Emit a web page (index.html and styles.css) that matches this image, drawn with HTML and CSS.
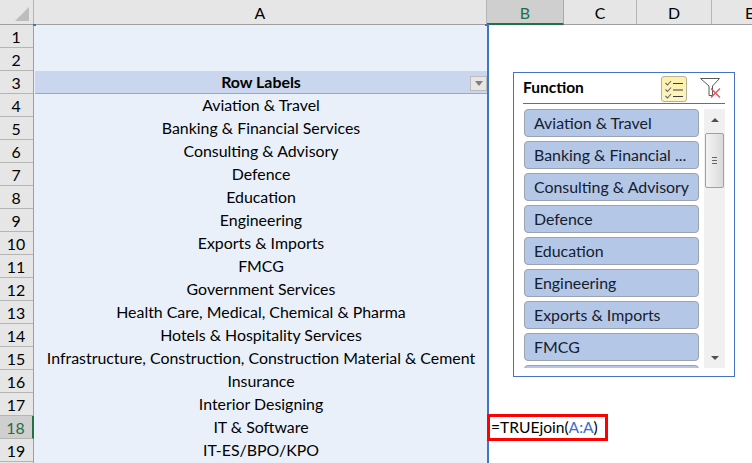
FILE: index.html
```html
<!DOCTYPE html>
<html lang="en">
<head>
<meta charset="utf-8">
<title>Sheet</title>
<link rel="stylesheet" href="styles.css">
</head>
<body>
<div class="sheet">
  <div class="colbar">
    <div class="corner"><svg width="16" height="16" viewBox="0 0 16 16"><polygon points="15,1 15,15 1,15" fill="#bdbdbd"/></svg></div>
    <div class="ch cha">A</div>
    <div class="ch chb">B</div>
    <div class="ch chc">C</div>
    <div class="ch chd">D</div>
    <div class="ch che">E</div>
  </div>
  <div class="body">
    <div class="rowbar">
      <div class="rh">1</div><div class="rh">2</div><div class="rh">3</div><div class="rh">4</div><div class="rh">5</div>
      <div class="rh">6</div><div class="rh">7</div><div class="rh">8</div><div class="rh">9</div><div class="rh">10</div>
      <div class="rh">11</div><div class="rh">12</div><div class="rh">13</div><div class="rh">14</div><div class="rh">15</div>
      <div class="rh">16</div><div class="rh">17</div><div class="rh rh-sel">18</div><div class="rh">19</div>
    </div>
    <div class="cola">
      <div class="cell"></div>
      <div class="cell"></div>
      <div class="cell head">Row Labels<span class="dd"><svg width="8" height="5" viewBox="0 0 8 5"><polygon points="0,0 8,0 4,5" fill="#7f7f7f"/></svg></span></div>
      <div class="cell">Aviation &amp; Travel</div>
      <div class="cell">Banking &amp; Financial Services</div>
      <div class="cell">Consulting &amp; Advisory</div>
      <div class="cell">Defence</div>
      <div class="cell">Education</div>
      <div class="cell">Engineering</div>
      <div class="cell">Exports &amp; Imports</div>
      <div class="cell">FMCG</div>
      <div class="cell">Government Services</div>
      <div class="cell">Health Care, Medical, Chemical &amp; Pharma</div>
      <div class="cell">Hotels &amp; Hospitality Services</div>
      <div class="cell">Infrastructure, Construction, Construction Material &amp; Cement</div>
      <div class="cell">Insurance</div>
      <div class="cell">Interior Designing</div>
      <div class="cell">IT &amp; Software</div>
      <div class="cell">IT-ES/BPO/KPO</div>
    </div>
    <div class="rest">
      <div class="formula">=TRUEjoin(<span class="ref">A:A</span>)</div>
      <section class="slicer">
        <header class="sl-head">
          <span class="sl-title">Function</span>
          <span class="sl-btn">
            <svg width="22" height="22" viewBox="0 0 22 22" fill="none">
              <path d="M2.500 5l2 2 3.500-4M2.500 11.500l2 2 3.500-4M2.500 18l2 2 3.500-4" stroke="#666" stroke-width="1.100"/>
              <path d="M10 5.500h10M10 12h10M10 18.500h10" stroke="#3c3c3c" stroke-width="1.100"/>
            </svg>
          </span>
          <span class="sl-clear">
            <svg width="21" height="20" viewBox="0 0 21 20" fill="none">
              <path d="M.5 .5h19l-7 7.500v9.500h-3.500v-9.500z" stroke="#5a5a5a" stroke-width="1" fill="#fff"/>
              <path d="M11 10.500l9 9M20 10.500l-9 9" stroke="#e8505a" stroke-width="1.300"/>
            </svg>
          </span>
        </header>
        <div class="sl-body">
          <div class="sl-list">
            <div class="item">Aviation &amp; Travel</div>
            <div class="item">Banking &amp; Financial ...</div>
            <div class="item">Consulting &amp; Advisory</div>
            <div class="item">Defence</div>
            <div class="item">Education</div>
            <div class="item">Engineering</div>
            <div class="item">Exports &amp; Imports</div>
            <div class="item">FMCG</div>
            <div class="item"></div>
          </div>
          <div class="scroll">
            <svg class="arrow" width="8" height="4" viewBox="0 0 8 4"><polygon points="4,0 8,4 0,4" fill="#505050"/></svg>
            <div class="thumb"><span class="grip"></span></div>
            <svg class="arrow arrow-down" width="8" height="4" viewBox="0 0 8 4"><polygon points="0,0 8,0 4,4" fill="#505050"/></svg>
          </div>
        </div>
      </section>
    </div>
  </div>
</div>
</body>
</html>
```

FILE: styles.css
```css
* { box-sizing: border-box; }
html, body { margin: 0; padding: 0; }
body {
  width: 752px;
  height: 463px;
  overflow: hidden;
  background: #fff;
  font-family: "Lato", "Liberation Sans", sans-serif;
  font-size: 15.900px;
  color: #000;
}
.sheet { display: flex; flex-direction: column; width: 752px; height: 463px; overflow: hidden; }
.colbar {
  display: flex;
  flex: none;
  height: 25px;
  background: #e6e6e6;
  border-bottom: 1px solid #9f9f9f;
}
.corner {
  width: 34px;
  flex: none;
  padding: 0 3px 2px 0;
  display: flex;
  align-items: flex-end;
  justify-content: flex-end;
  border-right: 1px solid #b5b5b5;
}
.ch {
  display: flex;
  align-items: center;
  justify-content: center;
  flex: none;
  height: 24px;
  border-right: 1px solid #b5b5b5;
}
.cha { width: 453px; background: #e6e6e6; }
.chb { width: 77px; background: #cfcfcf; color: #1f6e47; border-bottom: 2px solid #217346; height: 25px; padding-top: 1px; border-right-color: #a9a9a9; }
.chc { width: 73px; }
.chd { width: 75px; }
.che { width: 40px; border-right: 0; justify-content: flex-start; padding-left: 33px; }
.body { display: flex; flex: 1; min-height: 0; }
.rowbar { width: 34px; flex: none; border-right: 1px solid #9f9f9f; background: #e6e6e6; }
.rh {
  height: 23px;
  display: flex;
  align-items: center;
  justify-content: center;
  border-bottom: 1px solid #b5b5b5;
  padding-right: 1px;
}
.rh-sel { background: #cfcfcf; color: #1f6e47; border-right: 2px solid #217346; margin-right: -1px; }
.cola {
  position: relative;
  width: 455px;
  flex: none;
  background: #e9f0fa;
  border-right: 2px solid #3f74c6;
  padding-left: 1px;
}
.cola::before, .cola::after {
  content: "";
  position: absolute;
  top: -1px;
  width: 3px;
  height: 2px;
  background: #3f74c6;
}
.cola::before { left: -1px; }
.cola::after { right: -2px; width: 4px; }
.cell {
  height: 23px;
  line-height: 22px;
  text-align: center;
  white-space: nowrap;
}
.head {
  position: relative;
  background: #c9d6ed;
  border-bottom: 1px solid #8ea9db;
  font-weight: 700;
  line-height: 21px;
}
.dd {
  position: absolute;
  right: 0;
  top: 5px;
  width: 17px;
  height: 15px;
  background: #e6e6e6;
  border: 1px solid #bdbdbd;
  display: flex;
  align-items: center;
  justify-content: center;
}
.rest { flex: 1; position: relative; }
.formula {
  position: absolute;
  left: -2px;
  top: 389px;
  width: 121px;
  height: 27px;
  border: 3px solid #f00;
  background: #fff;
  font-size: 15.600px;
  line-height: 21px;
  padding-left: 1px;
  white-space: nowrap;
}
.ref { color: #3a6fc9; }
.slicer {
  position: absolute;
  left: 24px;
  top: 47px;
  width: 222px;
  height: 305px;
  background: #fff;
  border: 1px solid #4472c4;
  padding: 0 9px;
  overflow: hidden;
}
.sl-head {
  display: flex;
  align-items: center;
  height: 31px;
  padding-top: 1px;
  border-bottom: 1px solid #4472c4;
  margin-bottom: 5px;
}
.sl-title { font-weight: 700; font-size: 15.500px; flex: 1; padding-bottom: 4px; }
.sl-btn {
  width: 26px;
  height: 26px;
  display: flex;
  align-items: center;
  justify-content: center;
  background: linear-gradient(#fdf0a8, #fdf4c4);
  border: 1px solid #b5b09a;
  border-radius: 3px;
  margin-right: 13px;
}
.sl-clear { width: 21px; height: 20px; margin-right: 4px; margin-bottom: 1px; display: block; }
.sl-clear svg, .sl-btn svg { display: block; }
.sl-body { display: flex; gap: 5px; }
.sl-list { width: 175px; margin-left: 1px; flex: none; display: flex; flex-direction: column; gap: 4px; height: 259px; overflow: hidden; }
.item {
  flex: none;
  height: 28px;
  line-height: 26px;
  background: #b4c7e7;
  border: 1px solid #9ba3ae;
  border-radius: 4px;
  padding-left: 9px;
  color: #14202e;
  white-space: nowrap;
}
.scroll {
  width: 21px;
  height: 259px;
  flex: none;
  background: #f0f0f0;
  display: flex;
  flex-direction: column;
  align-items: center;
  position: relative;
}
.arrow { margin-top: 9px; flex: none; }
.arrow-down { margin-top: auto; margin-bottom: 8px; }
.thumb {
  width: 19px;
  height: 55px;
  margin-top: 11px;
  background: linear-gradient(90deg, #f4f4f4, #dadada);
  border: 1px solid #a0a0a0;
  border-radius: 2px;
  display: flex;
  align-items: center;
  justify-content: center;
}
.grip {
  width: 5px;
  height: 7px;
  background: repeating-linear-gradient(#666 0 1px, transparent 1px 3px);
}
```
